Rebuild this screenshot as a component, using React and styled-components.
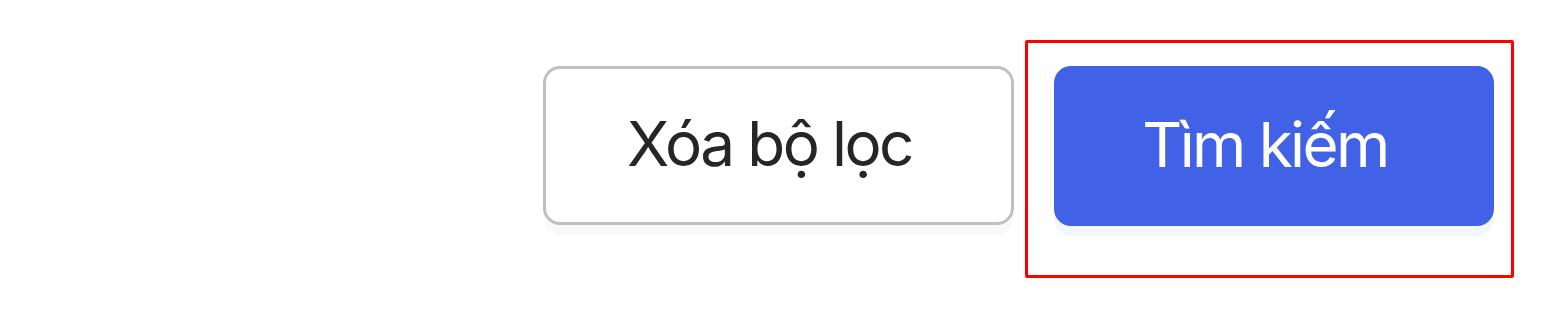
import React from 'react'
import styled, { createGlobalStyle } from 'styled-components'

const Global = createGlobalStyle`
  html, body {
    margin: 0;
    padding: 0;
    background: #ffffff;
    font-family: Inter, "Noto Sans", "Liberation Sans", sans-serif;
  }
`

export const Bar = styled.div`
  display: flex;
  justify-content: flex-end;
  align-items: flex-start;
  gap: 11px;
  padding: 40px 50px 0 0;
  height: 324px;
  box-sizing: border-box;
`

export const Button = styled.button`
  box-sizing: border-box;
  display: flex;
  align-items: center;
  justify-content: center;
  height: ${(p) => (p.primary ? '160px' : '159px')};
  width: ${(p) => (p.primary ? '440px' : '471px')};
  margin-top: ${(p) => (p.primary ? '0' : '26px')};
  padding: 0 18px 4px 0;
  border-radius: 17px;
  border: ${(p) => (p.primary ? 'none' : '3px solid #c0c0c0')};
  background: ${(p) => (p.primary ? '#4161e6' : '#ffffff')};
  color: ${(p) => (p.primary ? '#ffffff' : '#262626')};
  font-family: Inter, "Noto Sans", "Liberation Sans", sans-serif;
  font-size: 62px;
  font-weight: 400;
  letter-spacing: -2.6px;
  box-shadow: 0 10px 0 ${(p) => (p.primary ? '#f2f7ff' : '#f9f9f9')};
  cursor: pointer;
`

export const Highlight = styled.div`
  border: 3px solid #ff0000;
  border-radius: 2px;
  padding: 23px 17px 49px 26px;
`

export default function App() {
  return (
    <>
      <Global />
      <Bar>
        <Button>Xóa bộ lọc</Button>
        <Highlight>
          <Button primary>Tìm kiếm</Button>
        </Highlight>
      </Bar>
    </>
  )
}
